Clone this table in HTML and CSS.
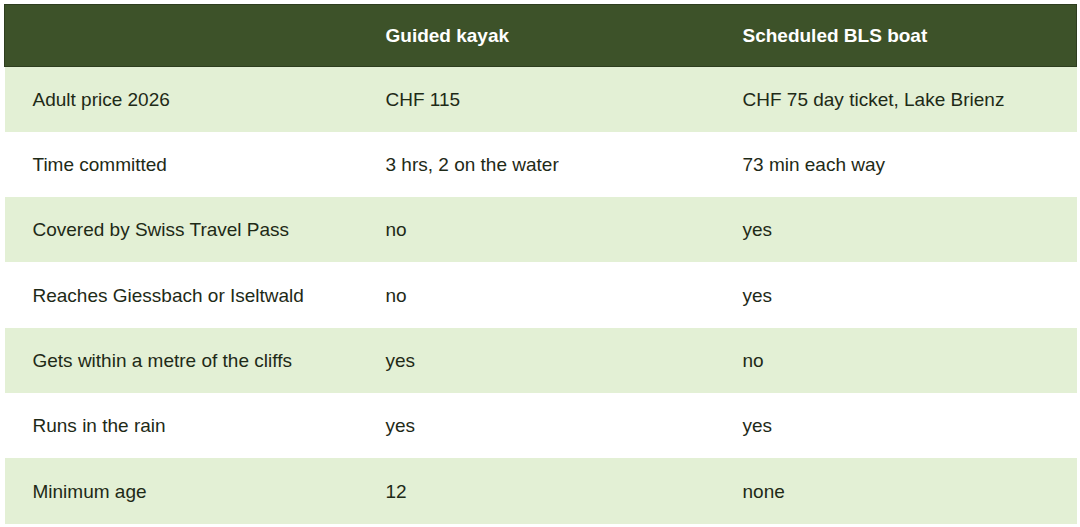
FILE: index.html
```html
<!DOCTYPE html>
<html>
<head>
<meta charset="utf-8">
<link rel="stylesheet" href="styles.css">
</head>
<body>
<table class="cmp">
  <colgroup>
    <col class="c1"><col class="c2"><col class="c3">
  </colgroup>
  <thead>
    <tr><th></th><th>Guided kayak</th><th>Scheduled BLS boat</th></tr>
  </thead>
  <tbody>
    <tr><td>Adult price 2026</td><td>CHF 115</td><td>CHF 75 day ticket, Lake Brienz</td></tr>
    <tr><td>Time committed</td><td>3 hrs, 2 on the water</td><td>73 min each way</td></tr>
    <tr><td>Covered by Swiss Travel Pass</td><td>no</td><td>yes</td></tr>
    <tr><td>Reaches Giessbach or Iseltwald</td><td>no</td><td>yes</td></tr>
    <tr><td>Gets within a metre of the cliffs</td><td>yes</td><td>no</td></tr>
    <tr><td>Runs in the rain</td><td>yes</td><td>yes</td></tr>
    <tr><td>Minimum age</td><td>12</td><td>none</td></tr>
  </tbody>
</table>
</body>
</html>
```
FILE: styles.css
```css
html, body { margin: 0; padding: 0; background: #ffffff; }
body { padding: 4px; font-family: "Liberation Sans", Arial, Helvetica, sans-serif; }
.cmp {
  width: 1072px;
  border-collapse: collapse;
  table-layout: fixed;
  font-size: 19px;
  color: #1e2a17;
}
.c1 { width: 353px; }
.c2 { width: 357px; }
.c3 { width: 362px; }
.cmp th {
  background: #3d5229;
  color: #ffffff;
  font-weight: bold;
  text-align: left;
  height: 62px;
  padding: 0 28px;
  box-sizing: border-box;
  border-top: 1px solid #2e3e1f;
  border-bottom: 1px solid #2e3e1f;
}
.cmp th:first-child { border-left: 1px solid #2e3e1f; }
.cmp th:last-child { border-right: 1px solid #2e3e1f; }
.cmp td {
  height: 65.33px;
  padding: 1px 28px 0;
  box-sizing: border-box;
  vertical-align: middle;
}
.cmp tbody tr:nth-child(odd) td { background: #e3f0d5; }
```
